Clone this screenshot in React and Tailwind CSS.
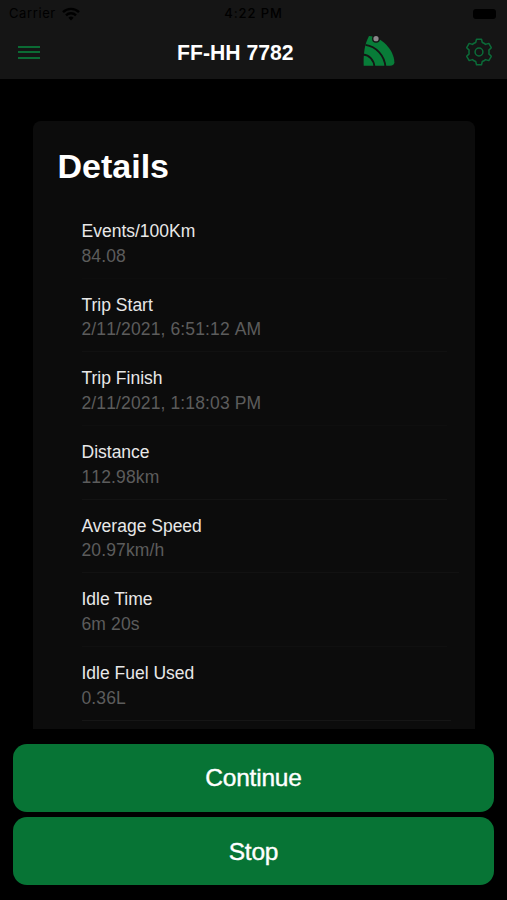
import React from 'react';

const details = [
    { label: 'Events/100Km', value: '84.08', line: 'mr-7 border-[#0e0e0e]' },
    { label: 'Trip Start', value: '2/11/2021, 6:51:12 AM', line: 'mr-7 border-[#111111]' },
    { label: 'Trip Finish', value: '2/11/2021, 1:18:03 PM', line: 'mr-7 border-[#0f0f0f]' },
    { label: 'Distance', value: '112.98km', line: 'mr-7 border-[#131313]' },
    { label: 'Average Speed', value: '20.97km/h', line: 'mr-4 border-[#121212]' },
    { label: 'Idle Time', value: '6m 20s', line: 'mr-7 border-[#101010]' },
    { label: 'Idle Fuel Used', value: '0.36L', line: 'mr-6 border-[#161616]' }
];

const WifiIcon = () => (
    <svg width="18" height="14" viewBox="0 0 18 14" fill="none" stroke="#000" strokeWidth="2.4">
        <path d="M1 5.2a11.3 11.3 0 0 1 16 0" />
        <path d="M4 8.3a7.1 7.1 0 0 1 10 0" />
        <path d="M9 13.4 6.4 10.7a3.7 3.7 0 0 1 5.2 0Z" fill="#000" stroke="none" />
    </svg>
);

const SignalLogo = () => (
    <svg width="32" height="32" viewBox="0 0 32 32">
        <path d="M6 1C18 2 31 14 31.400 27.500Q31.300 30.500 27 30.800H.7C.2 20 1.500 9 6 1Z" fill="#087c38" />
        <path d="M2.500 9.800C13 11.500 21.500 20 22.500 32" fill="none" stroke="#151515" strokeWidth="1.800" />
        <path d="M0 19.500C6.500 20 11 25 11.500 32" fill="none" stroke="#151515" strokeWidth="1.800" />
        <circle cx="13" cy="3.700" r="4" fill="#151515" />
        <circle cx="13" cy="3.700" r="2.600" fill="#8c878c" />
    </svg>
);

// Six narrow teeth around a small hub
const GearIcon = () => (
    <svg width="28" height="28" viewBox="-14 -14 28 28" fill="none" stroke="#0b6b38" strokeWidth="1.5" strokeLinejoin="round">
        <path d="M-2.500-12.800H2.500L3.300-9.500Q5 -8.900 6.580-7.610L9.800-8.600 12.300-4.300 9.880-1.890Q10.200 0 9.880 1.890L12.300 4.300 9.800 8.600 6.580 7.610Q5 8.900 3.300 9.500L2.500 12.800H-2.500L-3.300 9.500Q-5 8.900-6.580 7.610L-9.800 8.600-12.300 4.300-9.880 1.890Q-10.200 0-9.880-1.890L-12.300-4.300-9.800-8.600-6.580-7.610Q-5-8.900-3.300-9.500Z" />
        <circle r="3.900" />
    </svg>
);

const StatusBar = () => (
    <div className="grid h-7 grid-cols-3 items-center pl-[9px] pr-[11px] text-[13px] text-black">
        <div className="flex items-center gap-[6px]">
            <span className="tracking-[0.6px]">Carrier</span>
            <WifiIcon />
        </div>
        <span className="pl-[2px] text-center font-medium tracking-[0.9px]">4:22 PM</span>
        <span className="h-[10px] w-[23px] justify-self-end rounded-[3px] bg-black" />
    </div>
);

const Header = () => (
    <header className="h-[79px] bg-[#151515] font-['Inter',sans-serif]">
        <StatusBar />
        <div className="flex h-12 items-center pl-[18px] pr-[14px]">
            <button className="flex w-[22px] flex-col gap-[3.500px]">
                <span className="h-[2px] bg-[#0b6b34]" />
                <span className="h-[2px] bg-[#0b6b34]" />
                <span className="h-[2px] bg-[#0b6b34]" />
            </button>
            <h1 className="ml-[137px] w-[117px] whitespace-nowrap pt-px font-['Liberation_Sans',sans-serif] text-[21.200px] font-bold text-white">
                FF-HH 7782
            </h1>
            <div className="mb-[3px] ml-[69px]">
                <SignalLogo />
            </div>
            <button className="ml-auto">
                <GearIcon />
            </button>
        </div>
    </header>
);

const DetailItem = ({ label, value, line }) => (
    <div className={`h-[73.7px] border-b pt-[14px] text-[17.500px] leading-[24.500px] ${line}`}>
        <p className="text-[#e8e8e8]">{label}</p>
        <p className="tracking-[0.130px] text-[#5c5c5c] [font-kerning:none]">{value}</p>
    </div>
);

const ActionButton = ({ children }) => (
    <button className="h-[68px] w-full rounded-[14px] bg-[#077435] pt-[2px] text-[24.500px] tracking-[-0.2px] text-white [-webkit-text-stroke:0.4px_white]">
        {children}
    </button>
);

const App = () => {
    return (
        <div className="flex h-[900px] w-[507px] flex-col overflow-hidden bg-black font-['Liberation_Sans',sans-serif]">
            <Header />
            <main className="mx-[32.500px] mt-[42px] h-[608px] shrink-0 overflow-hidden rounded-t-lg bg-[#0c0c0c]">
                <h2 className="pl-[25px] pt-[25px] text-[34px] font-bold leading-10 text-white">Details</h2>
                <div className="ml-[49px] mt-[19px]">
                    {details.map((item) => (
                        <DetailItem key={item.label} {...item} />
                    ))}
                </div>
            </main>
            <footer className="flex flex-col gap-[5.500px] px-[13px] pt-[14.500px]">
                <ActionButton>Continue</ActionButton>
                <ActionButton>Stop</ActionButton>
            </footer>
        </div>
    );
};

export default App;
